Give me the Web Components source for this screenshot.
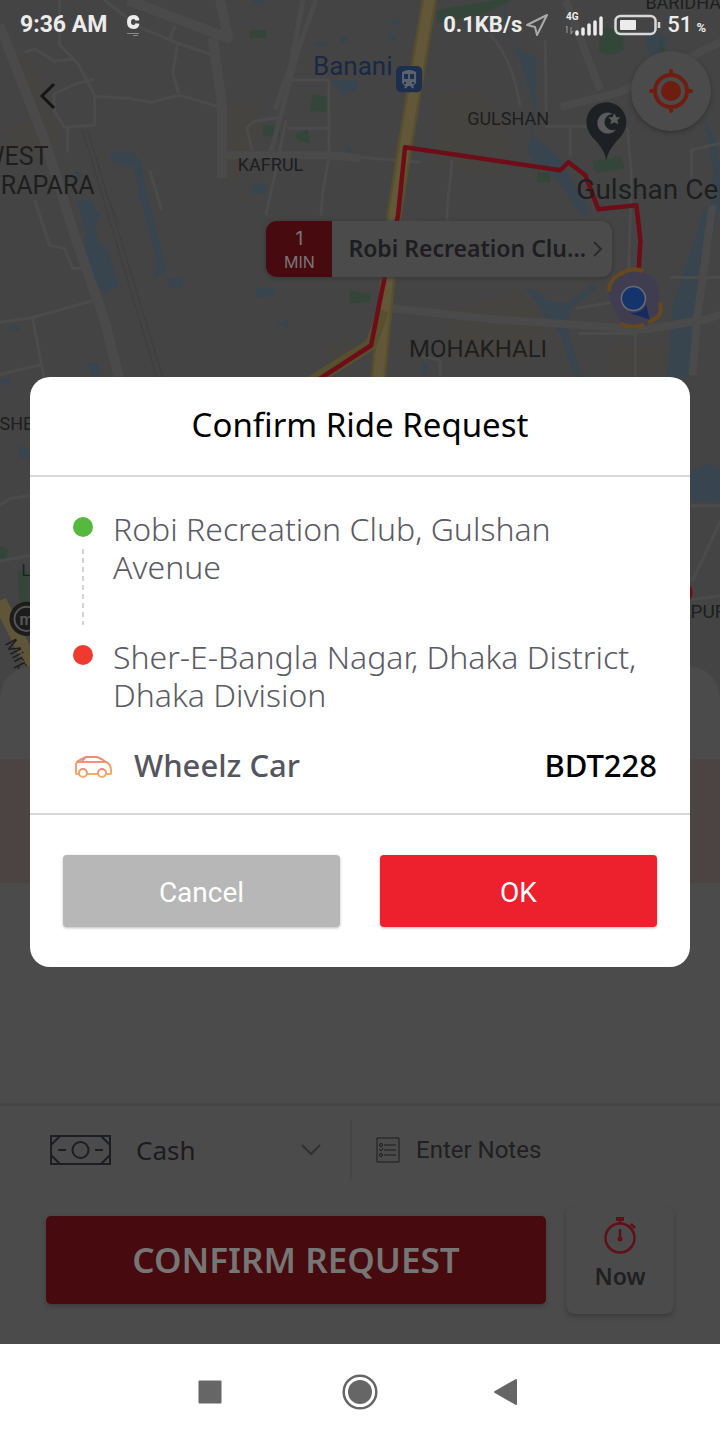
<!DOCTYPE html>
<html lang="en">
<head>
<meta charset="utf-8">
<meta name="viewport" content="width=device-width, initial-scale=1">
<title>Confirm Ride Request</title>
<style>
  html, body { margin: 0; background: #fff; }
  body { font-family: "Noto Sans", "Open Sans", sans-serif; }
</style>
</head>
<body>
<ride-screen></ride-screen>

<script>
const define = (name, html) => {
  const template = document.createElement('template');
  template.innerHTML = html;
  customElements.define(name, class extends HTMLElement {
    constructor() {
      super();
      this.attachShadow({ mode: 'open' }).append(template.content.cloneNode(true));
    }
  });
};

/* Status bar: clock on the left, network and battery on the right */
define('status-bar', `
<style>
  :host { display: flex; align-items: center; justify-content: space-between; height: 50px; padding: 0 14px 0 20px;
    font: 700 22px/28px Roboto, sans-serif; color: #ececec; }
  div { display: flex; align-items: center; }
  svg { display: block; }
  .left { gap: 18px; font-size: 23px; }
  .nav { margin-left: 2px; }
  .signal { margin: 0 10px 0 14px; }
  .level { margin-left: 6px; font-weight: 500; }
  .unit { font-size: 13px; margin: 6px 0 0 4px; }
</style>
<div class="left"><span>9:36 AM</span>
  <svg width="20" height="24" viewBox="0 0 20 24"><path d="M12.500 7.500Q12 4 8.500 4 4 4 4 9t4.500 5Q12 14 12.500 10.500" fill="none" stroke="#ececec" stroke-width="4"/><path d="M2 20.500h12M8 22.500h5" stroke="#888" stroke-width="1"/></svg>
</div>
<div>
  <span>0.1KB/s</span>
  <svg class="nav" width="28" height="26" viewBox="0 0 28 26"><path d="M23 3L13 23l-2-8-8-2z" fill="none" stroke="#aaa" stroke-width="2" stroke-linejoin="round"/></svg>
  <svg class="signal" width="38" height="28" viewBox="0 0 38 28">
    <text x="0" y="9" font-family="Roboto, sans-serif" font-size="10" font-weight="700" fill="#ececec">4G</text>
    <path d="M1 22v-7l-2 3M5 16v7l2-3" fill="none" stroke="#999" stroke-width="1"/>
    <path d="M11 23v-2M17 23v-5M23 23v-9M29 23v-12M35 23v-16" stroke="#ececec" stroke-width="3.500" stroke-linecap="round"/>
  </svg>
  <svg width="47" height="22" viewBox="0 0 47 22"><rect x="1.500" y="2" width="40" height="18" rx="5" fill="none" stroke="#d8d8d8" stroke-width="2.500"/><rect x="6" y="6" width="16" height="10" rx="1" fill="#ececec"/><path d="M45 8v6" stroke="#d8d8d8" stroke-width="2.500"/></svg>
  <span class="level">51</span><span class="unit">%</span>
</div>`);

/* City map with roads, water, parks, the ride route and place labels */
define('city-map', `
<style>
  :host { display: block; overflow: hidden; background: #444; }
  svg { display: block; width: 100%; height: 100%; }
  text { font-family: Roboto, sans-serif; fill: #1e1e1e; }
</style>
<svg viewBox="0 0 720 700" preserveAspectRatio="xMidYMin slice" role="img" aria-label="Map of Dhaka with the ride route">
  <g fill="#464440">
    <path d="M10 50L42 75 60 140 45 160 15 150 12 130 35 118 30 90z"/>
    <path d="M228 104h30v30l-20 45h-10z"/>
    <path d="M435 95l45-5 30 50-10 38-65-18z"/><path d="M450 310l70-18 25 30-15 40-80-5z"/>
    <path d="M610 345h80v30h-80zM330 345l25-5v15l-25 12z"/>
  </g>
  <g fill="#38454f">
    <path d="M112 153l20-2 9 10 7 39h-7l-8-34-22-4z"/>
    <path d="M138 188h8l21 82-14 10 4-17z"/>
    <path d="M78 200l14 0 8 15-4 12 2 14q12 8 14 22l7 23-15 7-14-17q-5-20-4-43z"/>
    <path d="M168 277h15v10h-15zM256 289l19-2v8l-19 2zM276 323l12-4v9zM88 362h9l4 12-9 2zM252 183h14v10h-14zM10 324h9v7h-9zM0 378h11v6H0z"/>
    <path d="M315 42h12l1 4h-13zM341 35l9 4-8 5zM330 80l28 0v9l-14 5zM346 145l7 4v6h-7zM75 170l7 4-3 6zM335 85h9v4zM255 0h8l2 4h-12z"/>
    <path d="M505 0q-5 30 10 48l21 10-1 52-3 25 25 20 18 30 15 27-8 5-25-37-29-25 5-50-12-45q-16-18-15-60z"/>
    <path d="M525 288q15 0 21 13l22 1 26-20v8l-26 20v22l10 35 8 20h-7l-10-25-8-27-14-15-9-15z"/>
    <path d="M705 205h14l-11 50-7 70-7 52h-28l7-75z"/>
    <path d="M643 32l10-3 14 10-3 16h-15zM704 120l12 20 4 40v30l-10-3 3-35z"/>
    <path d="M690 471l18-9 12 7v33l-30-2zM422 362h6v12h-6zM18 443l12 5v11l-10-2z"/>
    <path d="M385 20l15 0-3 6zM388 32l10 6-8 3z"/>
  </g>
  <g fill="#344639">
    <path d="M313 94l14 2v16l-17-2zM263 125h17v11h-17zM296 134l12-5 2 14-12-3zM250 30h16v8h-16z"/>
    <path d="M599 36q0-10 10-8l14 6v16q-12 9-24 2zM592 161l28-5 4 12-28 5zM537 172h13v10h-13zM437 10l60-10h15l-30 15-45 8zM660 35l5 18-6 1z"/>
    <path d="M350 290l20 4v7l-20 2zM18 570h12v45l-10-15zM0 545l8 3v12H0z"/>
  </g>
  <g fill="none" stroke="#4b4b4b" stroke-width="3" stroke-linejoin="round">
    <path d="M60 0v45l18 18 17 32v30l-30 2-10-15-1-18 22-10 18-5M95 96l32 2 25 4 28-7 40 12M68 127v25M25 52l10-3 20 12 20-2"/>
    <path d="M105 0l15 12 22 16 36 15 35 12M178 43l-5 30 6 20M170 40l5-14"/>
    <path d="M280 117l-25 4-8 6 5 23M329 82v75l-6 33-2 25M266 215l12-55 8-40M290 80l40 0M287 128h42"/>
    <path d="M35 200l15 45 15 3 8 20h12M0 322l33-5 65-18M33 317l12 63M0 374l42-10"/>
    <path d="M150 170l12 40M360 157l60 5M452 160l-5 50 0 15-45-5M545 40l1 86h50"/>
    <path d="M490 35q22 22 30 72M570 126v30M627 128l4 45-3 110M670 277h60M575 308l60-10M635 320v60M578 333h60M690 150l30-7M691 150v28"/>
    <path d="M0 505l10-7 30-5M0 560l30-5M680 600l40-5M692 580l28-60M690 505h30M420 355l20 5v30"/>
  </g>
  <g fill="none" stroke="#4a4a4a" stroke-linejoin="round">
    <path d="M0 25L45 140 75 235 105 320 120 380" stroke-width="10"/>
    <path d="M128 0l100 38-8-40M213 38l9 65v75" stroke-width="10"/>
    <path d="M316 0l-18 50-25 95-3 8M303 0l-12 65-16 45" stroke-width="5"/>
    <path d="M220 155h110l30 3M565 0l35 90M560 107l60-15 100-50" stroke-width="8"/>
    <path d="M385 307l110 12 150 10 60-10 15-5M712 205l-15 110-5 60" stroke-width="8"/>
  </g>
  <path d="M83 130L158 380M88 130L164 380M105 190l15 35" fill="none" stroke="#3e3e3e" stroke-width="1"/>
  <path d="M430-5L405 145 394 215 378 380" fill="none" stroke="#57502e" stroke-width="15"/>
  <path d="M430-5L405 145 394 215 378 380" fill="none" stroke="#625839" stroke-width="10"/>
  <path d="M383 310L371 344 300 388" fill="none" stroke="#57502e" stroke-width="12"/>
  <path d="M0 600L35 670" fill="none" stroke="#605538" stroke-width="14"/>
  <path d="M300 391L371 345 382 290 398 215 405 147 560 170 568 162 585 175 598 209 636 205 640 240 638 275" fill="none" stroke="#6e0c18" stroke-width="4.500" stroke-linejoin="round"/>
  <circle cx="680" cy="592" r="12" fill="#6e0c18"/>

  <rect x="396" y="66" width="26" height="26" rx="5" fill="#1d2f4f"/>
  <path d="M402 72q7-4 14 0v11l-3 3 1 2h-2l-2-2h-2l-2 2h-2l1-2-3-3z" fill="#5b636f"/>
  <path d="M404 74h4v5h-4zM410 74h4v5h-4zM404 82h2v2h-2zM412 82h2v2h-2z" fill="#1d2f4f"/>
  <path d="M606 160q-1-8-10-19-10-9-10-19a20 20 0 0 1 40 0q0 10-10 19-9 11-10 19z" fill="#1e2123"/>
  <path d="M613 114a10.500 10.500 0 1 0 3 15 8 8 0 1 1-3-15z" fill="#5a5a5a"/>
  <path d="M614 113l2 4 4 0-3 3 1 4-4-2-4 2 1-4-3-3 4 0z" fill="#5a5a5a"/>
  <g>
    <path d="M624 271q9-5 18-2l5 5q10 4 11 14l2 14q3 6-1 13l-13 10q-14 6-25 0l-3-10q-10-14-10-24-1-14 16-20z" fill="#403d51"/>
    <path d="M609 291q-2-12 16-20 9-4 18 0M659 302q3 8-1 14l-10 6M620 323q12 6 24 1" fill="none" stroke="#66481f" stroke-width="4"/>
    <path d="M628 312q14 2 18-8l3 15z" fill="#152a5e"/>
    <circle cx="633" cy="298" r="12" fill="#16346c" stroke="#6b6b76" stroke-width="1.500"/>
  </g>
  <circle cx="27" cy="618" r="17" fill="#1c1c1c"/><circle cx="27" cy="618" r="12" fill="none" stroke="#555" stroke-width="2"/>
  <text x="27" y="624" font-size="16" font-weight="700" text-anchor="middle" style="fill:#555">m</text>

  <text x="645" y="9" font-size="18">BARIDHARA</text>
  <text x="313" y="75" font-size="26" style="fill:#1a2844">Banani</text>
  <text x="467" y="125" font-size="18">GULSHAN</text>
  <text x="238" y="171" font-size="18">KAFRUL</text>
  <text x="49" y="165" font-size="25" text-anchor="end">WEST</text>
  <text x="95" y="194" font-size="25" text-anchor="end">WRAPARA</text>
  <text x="576" y="199" font-size="28">Gulshan Cen</text>
  <text x="409" y="356" font-size="24">MOHAKHALI</text>
  <text x="0" y="429" font-size="18">SHE</text>
  <text x="22" y="575" font-size="16">L</text>
  <text x="690" y="617" font-size="19">PUR</text>
  <text x="5" y="642" font-size="17" transform="rotate(62 5 642)">Mirpur</text>
</svg>`);

/* Back and locate-me controls above the map */
define('map-controls', `
<style>
  :host { display: flex; justify-content: space-between; align-items: center; padding: 1px 9px 0 24px; }
  button { display: grid; place-items: center; padding: 0; border: 0; background: none; }
  .back { width: 48px; height: 48px; margin-top: 10px; }
  .locate { width: 80px; height: 80px; border-radius: 50%; background: #4b4b4b; box-shadow: 0 2px 4px #333; }
</style>
<button class="back" aria-label="Back"><svg width="20" height="28" viewBox="0 0 20 28"><path d="M16 2L4 14l12 12" fill="none" stroke="#151515" stroke-width="3"/></svg></button>
<button class="locate" aria-label="My location"><svg width="44" height="44" viewBox="0 0 44 44"><g fill="none" stroke="#6e1d0e"><circle cx="22" cy="22" r="16" stroke-width="4"/><path d="M22 2v4M22 38v4M2 22h4M38 22h4" stroke-width="4" stroke-linecap="round"/></g><circle cx="22" cy="22" r="10" fill="#6e1d0e"/></svg></button>`);

/* Pickup callout pinned on the map */
define('pickup-callout', `
<style>
  :host { display: block; }
  button { display: flex; align-items: stretch; width: 100%; height: 56px; padding: 0; border: 0; border-radius: 11px; overflow: hidden;
    background: #4b4b4b; color: #1d1d22; box-shadow: 0 1px 4px #333; text-align: left; font: 600 23px/54px "Noto Sans", sans-serif; }
  .eta { flex: 0 0 66px; display: flex; flex-direction: column; background: #470a0e; color: #777; text-align: center; font: 400 16px/22px Inter, sans-serif; padding-top: 6px; box-sizing: border-box; }
  .eta b { font-weight: 400; font-size: 19px; line-height: 24px; }
  .name { flex: 1; min-width: 0; padding-left: 16px; white-space: nowrap; }
  svg { flex: none; align-self: center; margin-right: 8px; }
</style>
<button><span class="eta"><b>1</b><span>MIN</span></span><span class="name"><slot></slot></span>
<svg width="12" height="20" viewBox="0 0 12 20"><path d="M2 3l7 7-7 7" fill="none" stroke="#2b2b2b" stroke-width="2"/></svg></button>`);

/* Sheet with the selected ride type row, under the dialog */
define('ride-sheet', `
<style>
  :host { display: block; height: 437px; margin-top: -35px; position: relative; background: #4b4b4b; border-radius: 32px 32px 0 0; padding-top: 93px; box-sizing: border-box; }
  .selected { height: 124px; background: #4b4443; }
</style>
<div class="selected"></div>`);

/* Payment, notes and confirm actions */
define('booking-bar', `
<style>
  :host { display: block; background: #4b4b4b; border-top: 3px solid #454545; padding: 14px 46px 30px; }
  .options { display: flex; align-items: center; height: 60px; }
  .pay { display: flex; align-items: center; flex: 0 0 306px; height: 60px; border-right: 2px solid #454545; box-sizing: border-box; }
  select { appearance: none; border: 0; padding: 0; margin: 0 0 0 22px; flex: 1; min-width: 0; background: none; color: #1c1c1e; font: 400 26px/36px "Noto Sans", sans-serif; opacity: 1; }
  .pay .chev { margin-right: 28px; }
  .notes { display: flex; align-items: center; flex: 1; min-width: 0; gap: 16px; padding-left: 24px; }
  input { border: 0; padding: 0; background: none; flex: 1; min-width: 0; height: 36px; font: 400 24px/36px Roboto, sans-serif; }
  input::placeholder { color: #202020; opacity: 1; }
  svg { flex: none; display: block; }
  .actions { display: flex; align-items: center; gap: 20px; margin-top: 26px; }
  .confirm { flex: 1; height: 88px; border: 0; border-radius: 5px; background: #470a0e; color: #767676; font: 600 35px/40px "Noto Sans", sans-serif; box-shadow: 0 2px 4px #3a3a3a; }
  .now { display: flex; flex-direction: column; align-items: center; gap: 4px; width: 108px; height: 108px; border: 0; border-radius: 9px; padding: 10px 0 0; background: #4b4b4b; color: #202020; font: 600 23px/32px "Noto Sans", sans-serif; box-shadow: 0 3px 4px #3c3c3c; }
</style>
<div class="options">
  <div class="pay">
    <svg width="68" height="32" viewBox="0 0 68 32"><g fill="none" stroke="#1d1e23" stroke-width="2"><path d="M5 2h59v28H5zM14 2L5 11M55 2l9 9M14 30l-9-9M55 30l9-9"/><circle cx="34.500" cy="16" r="8"/><path d="M12 16h8M49 16h8"/></g></svg>
    <select aria-label="Payment method"><option>Cash</option></select>
    <svg class="chev" width="22" height="14" viewBox="0 0 22 14"><path d="M2 2l9 9 9-9" fill="none" stroke="#303030" stroke-width="2"/></svg>
  </div>
  <label class="notes">
    <svg width="24" height="26" viewBox="0 0 24 26"><path d="M1 1h22v24H1z" fill="none" stroke="#1c1c1c" stroke-width="1"/><g fill="none" stroke="#1c1c1c" stroke-width="1"><path d="M8 8h12M8 13h12M8 18h12"/><circle cx="5" cy="8" r="1.500"/><path d="M3 12l2 2 2-3"/><circle cx="5" cy="18" r="1.500"/></g></svg>
    <input type="text" placeholder="Enter Notes" aria-label="Enter Notes">
  </label>
</div>
<div class="actions">
  <button class="confirm">CONFIRM REQUEST</button>
  <button class="now">
    <svg width="36" height="40" viewBox="0 0 36 40"><g fill="none" stroke="#5e1118" stroke-width="2.500"><circle cx="18" cy="22" r="14.500"/><path d="M14 3h8" stroke-width="4"/><path d="M18 4v4M18 13v10M29 8l4 4"/></g><circle cx="18" cy="23" r="2.500" fill="#5e1118"/></svg>
    <span>Now</span>
  </button>
</div>`);

/* One stop of the trip; "linked" draws the dashed line to the next one */
define('trip-stop', `
<style>
  :host { display: grid; grid-template-columns: 20px 1fr; column-gap: 20px; color: #5b5b66; font: 300 32px/38px "Noto Sans", "Open Sans", sans-serif; }
  :host([linked]) { min-height: 128px; }
  .mark { display: flex; flex-direction: column; align-items: center; gap: 12px; padding-top: 7px; }
  .dot { width: 20px; height: 20px; border-radius: 50%; background: var(--dot); }
  .line { display: none; width: 2px; height: 76px; background: repeating-linear-gradient(#d4d4d4 0 5px, transparent 5px 9px); }
  :host([linked]) .line { display: block; }
</style>
<div class="mark"><div class="dot"></div><div class="line"></div></div>
<div><slot></slot></div>`);

define('confirm-dialog', `
<style>
  :host { display: block; background: #fff; border-radius: 20px; overflow: hidden; }
  h1 { margin: 0; height: 98px; border-bottom: 2px solid #d8d8d8; text-align: center; color: #000; font: 400 33px/96px "Noto Sans", sans-serif; }
  .body { padding: 33px 33px 0 43px; }
  .fare { display: flex; align-items: center; margin-top: 28px; padding-bottom: 25px; font: 500 31px/46px "Noto Sans", sans-serif; color: #555560; }
  .fare svg { flex: none; margin-right: 20px; }
  .fare b { margin-left: auto; color: #000; font-weight: 500; }
  .actions { display: flex; gap: 40px; padding: 40px 33px; border-top: 2px solid #d8d8d8; }
  button { flex: 1; height: 72px; padding: 3px 0 0; border: 0; border-radius: 4px; color: #fff; font: 400 28px/36px Roboto, sans-serif; box-shadow: 0 1px 3px #bbb; }
  .cancel { background: #b7b7b7; }
  .ok { background: #ed212d; }
</style>
<section role="dialog" aria-labelledby="title">
  <h1 id="title">Confirm Ride Request</h1>
  <div class="body">
    <slot></slot>
    <div class="fare">
      <svg width="41" height="26" viewBox="0 0 41 26"><defs><linearGradient id="g" x2="0" y2="1"><stop stop-color="#f08a78"/><stop offset="1" stop-color="#f7ad68"/></linearGradient></defs><g fill="none" stroke="url(#g)" stroke-width="2" stroke-linejoin="round"><path d="M6 22H3V12q1-3 4-4l6-3h11q3 1 9 5 5 2 5 8v4h-5M14 22h11M3 10h30M13 5l-4 4"/><circle cx="10" cy="21" r="4"/><circle cx="29" cy="21" r="4"/></g></svg>
      <span>Wheelz Car</span><b>BDT228</b>
    </div>
  </div>
  <div class="actions"><button class="cancel">Cancel</button><button class="ok">OK</button></div>
</section>`);

define('system-nav', `
<style>
  :host { display: flex; justify-content: center; align-items: center; gap: 102px; height: 96px; background: #fff; }
  button { width: 48px; height: 48px; padding: 0; border: 0; background: none; }
  svg { display: block; width: 48px; height: 48px; }
</style>
<button aria-label="Recent apps"><svg viewBox="0 0 48 48"><rect x="12.500" y="12.500" width="23" height="23" rx="1" fill="#666"/></svg></button>
<button aria-label="Home"><svg viewBox="0 0 48 48"><circle cx="24" cy="24" r="12" fill="#666"/><circle cx="24" cy="24" r="16.300" fill="none" stroke="#666" stroke-width="2.500"/></svg></button>
<button aria-label="Back"><svg viewBox="0 0 48 48"><path d="M9 24l21-12v24z" fill="#666" stroke="#666" stroke-width="2" stroke-linejoin="round"/></svg></button>`);

define('ride-screen', `
<style>
  :host { display: flex; flex-direction: column; min-height: 100vh; }
  .app { position: relative; flex: 1; display: flex; flex-direction: column; background: #4b4b4b; }
  .map { position: relative; flex: 1; min-height: 600px; }
  city-map { position: absolute; inset: 0; }
  status-bar, map-controls { position: relative; }
  pickup-callout { position: absolute; top: 221px; left: 37%; width: 48%; }
  .overlay { position: absolute; inset: 0; display: flex; align-items: center; padding: 0 30px; }
  confirm-dialog { flex: 1; min-width: 0; }
  .from { --dot: #55b83f; }
  .to { --dot: #f03a30; }
</style>
<div class="app">
  <div class="map">
    <city-map></city-map>
    <status-bar></status-bar>
    <map-controls></map-controls>
    <pickup-callout>Robi Recreation Clu...</pickup-callout>
  </div>
  <ride-sheet></ride-sheet>
  <booking-bar></booking-bar>
  <div class="overlay">
    <confirm-dialog>
      <trip-stop class="from" linked>Robi Recreation Club, Gulshan Avenue</trip-stop>
      <trip-stop class="to">Sher-E-Bangla Nagar, Dhaka District, Dhaka Division</trip-stop>
    </confirm-dialog>
  </div>
</div>
<system-nav></system-nav>`);
</script>
</body>
</html>
